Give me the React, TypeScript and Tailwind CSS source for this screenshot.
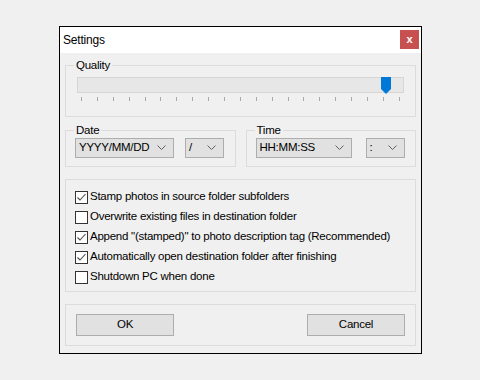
import React from "react";

const font = { fontFamily: '"Liberation Sans", Arial, sans-serif' };

function Chevron() {
  return (
    <svg width="9" height="6" viewBox="0 0 9 6" className="shrink-0">
      <polyline points="0.5,0.5 4.5,4.5 8.5,0.5" fill="none" stroke="#606060" strokeWidth="1" />
    </svg>
  );
}

function Combo({ value, width }: { value: string; width: string }) {
  return (
    <div
      className={`${width} h-[20px] flex items-center justify-between pl-[3px] pr-[7px] bg-[#e1e1e1] border border-[#adadad] text-[11.5px] tracking-[-0.25px] leading-none text-black whitespace-nowrap`}
    >
      <span>{value}</span>
      <Chevron />
    </div>
  );
}

function CheckRow({ label, checked }: { label: string; checked: boolean }) {
  return (
    <div className="h-[20px] flex items-center gap-[2px] whitespace-nowrap">
      <div className="w-[13px] h-[13px] shrink-0 border border-[#333333] bg-white flex items-center justify-center">
        {checked && (
          <svg width="11" height="11" viewBox="0 0 11 11">
            <polyline points="1.5,5.5 4,8 9.5,2" fill="none" stroke="#4a4a4a" strokeWidth="1.1" />
          </svg>
        )}
      </div>
      <span className="text-[11.5px] tracking-[-0.25px] text-black">{label}</span>
    </div>
  );
}

export default function App() {
  const ticks = Array.from({ length: 21 }, (_, i) => i);
  const options = [
    { label: "Stamp photos in source folder subfolders", checked: true },
    { label: "Overwrite existing files in destination folder", checked: false },
    { label: 'Append "(stamped)" to photo description tag (Recommended)', checked: true },
    { label: "Automatically open destination folder after finishing", checked: true },
    { label: "Shutdown PC when done", checked: false },
  ];

  return (
    <div className="w-[480px] h-[380px] bg-[#f0f0f0] pl-[59px] pt-[26px]" style={font}>
      <div className="w-[363px] h-[328px] border border-black bg-[#f0f0f0] flex flex-col">
        {/* title bar */}
        <div className="h-[26px] bg-white flex items-start justify-between pl-[3px] pr-[2px]">
          <span className="text-[12px] tracking-[-0.2px] leading-[26px] text-black">Settings</span>
          <div className="mt-[3px] w-[19px] h-[19px] bg-[#c75050] flex items-center justify-center text-white text-[11px] font-bold leading-none">
            x
          </div>
        </div>

        <div className="px-[5px] pt-[4px] flex flex-col">
          {/* quality */}
          <fieldset className="border border-[#dcdcdc] pl-[8px] pr-[11px] pb-[15px]">
            <legend className="px-[2px] text-[11.5px] tracking-[-0.25px] leading-[16px] text-black">Quality</legend>
            <div className="ml-[3px] mt-[4px]">
              <div className="relative h-[16px] bg-[#e7e7e7] border border-[#d6d6d6]">
                <svg
                  width="10"
                  height="17"
                  viewBox="0 0 10 17"
                  className="absolute left-[303px] top-[-1px]"
                >
                  <path d="M0 0 H10 V12 L5 17 L0 12 Z" fill="#0078d7" />
                </svg>
              </div>
              <div className="mt-[4px] h-[4px] flex justify-between px-[4px]">
                {ticks.map((t) => (
                  <div key={t} className="w-px h-[4px] bg-[#a8a8a8]" />
                ))}
              </div>
            </div>
          </fieldset>

          {/* date / time */}
          <div className="mt-[5px] grid grid-cols-2 gap-[10px]">
            <fieldset className="border border-[#dcdcdc] pl-[8px] pb-[8px]">
              <legend className="px-[2px] text-[11.5px] tracking-[-0.25px] leading-[16px] text-black">Date</legend>
              <div className="flex ml-[1px] gap-[11px]">
                <Combo value="YYYY/MM/DD" width="w-[99px]" />
                <Combo value="/" width="w-[39px]" />
              </div>
            </fieldset>
            <fieldset className="border border-[#dcdcdc] pl-[8px] pb-[8px]">
              <legend className="px-[2px] text-[11.5px] tracking-[-0.25px] leading-[16px] text-black">Time</legend>
              <div className="flex ml-[1px] gap-[14px]">
                <Combo value="HH:MM:SS" width="w-[96px]" />
                <Combo value=":" width="w-[39px]" />
              </div>
            </fieldset>
          </div>

          {/* options */}
          <fieldset className="mt-[12px] border border-[#dcdcdc] pl-[9px] pt-[7px] pb-[4px]">
            {options.map((o) => (
              <CheckRow key={o.label} label={o.label} checked={o.checked} />
            ))}
          </fieldset>

          {/* buttons */}
          <fieldset className="mt-[12px] border border-[#dcdcdc] px-[10px] pt-[9px] pb-[9px] flex justify-between">
            <button className="w-[98px] h-[22px] bg-[#e1e1e1] border border-[#adadad] text-[11.5px] tracking-[-0.25px] text-black">
              OK
            </button>
            <button className="w-[98px] h-[22px] bg-[#e1e1e1] border border-[#adadad] text-[11.5px] tracking-[-0.25px] text-black">
              Cancel
            </button>
          </fieldset>
        </div>
      </div>
    </div>
  );
}
